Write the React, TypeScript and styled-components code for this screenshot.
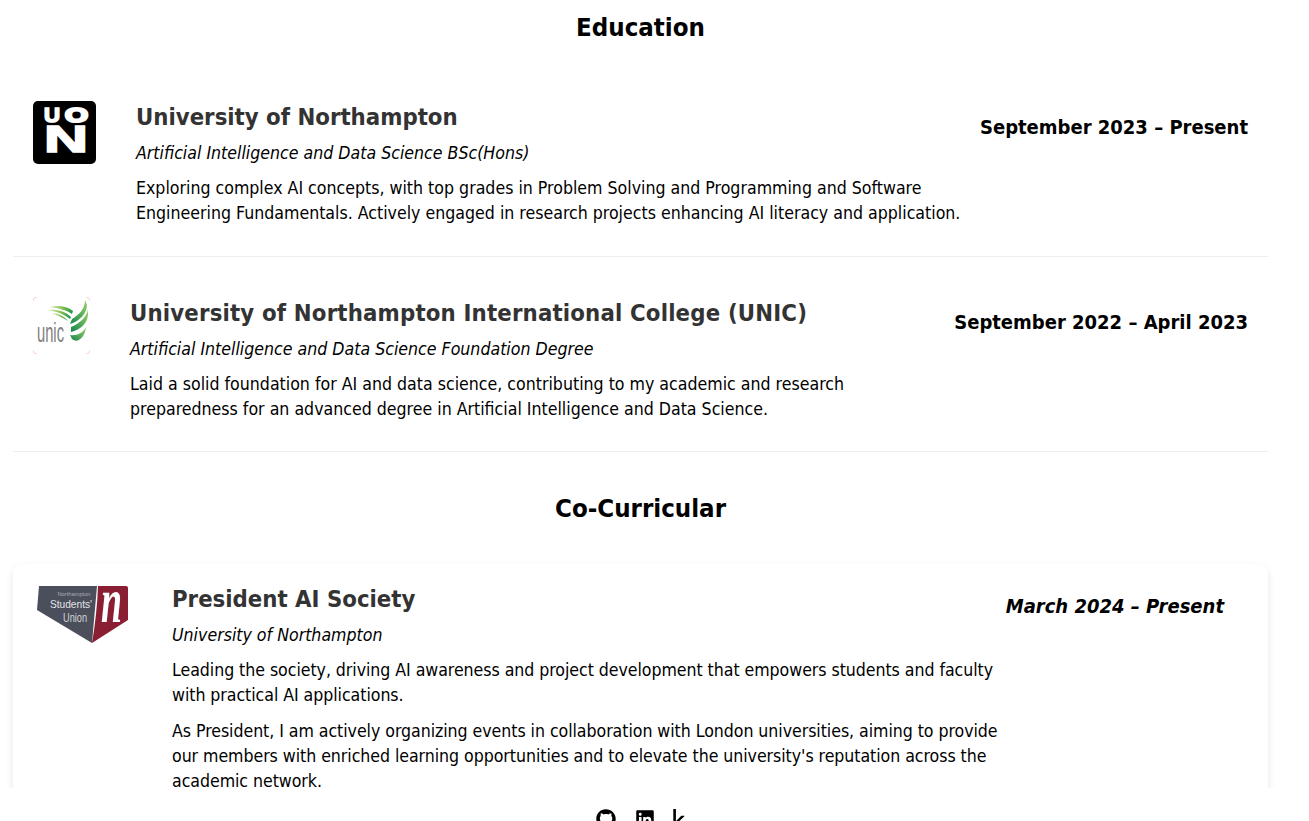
import styled, { createGlobalStyle } from 'styled-components';
import { FaGithub, FaKaggle, FaLinkedin } from 'react-icons/fa';

const GlobalStyle = createGlobalStyle`
  html, body {
    margin: 0;
    padding: 0;
    background: #fff;
    overflow: hidden;
  }

  body {
    font-family: 'DejaVu Sans Condensed', 'DejaVu Sans', sans-serif;
    color: #000;
  }
`;

const Page = styled.div`
  height: 821px;
  overflow: hidden;
`;

const Main = styled.main`
  height: 788px;
  overflow: hidden;
  padding: 0 41px 0 13px;
`;

const SectionTitle = styled.h2<{ $first?: boolean }>`
  margin: ${(p) => (p.$first ? '11px 0 18px' : '40px 0 40px')};
  font-size: 25.6px;
  line-height: 32px;
  font-weight: 700;
  text-align: center;
`;

const Entry = styled.section<{ $card?: boolean }>`
  display: flex;
  align-items: flex-start;
  padding: ${(p) => (p.$card ? '18.5px 44px 29px 20px' : '40px 20px 29.5px')};
  border-bottom: ${(p) => (p.$card ? 'none' : '1px solid #eee')};
  border-radius: ${(p) => (p.$card ? '10px' : '0')};
  box-shadow: ${(p) => (p.$card ? '0 4px 8px rgba(0, 0, 0, 0.1)' : 'none')};
`;

const Logo = styled.div<{ $width: number }>`
  flex: none;
  width: ${(p) => p.$width}px;
  margin-right: 40px;
  line-height: 0;
`;

const Body = styled.div`
  flex: 1;
  min-width: 0;
`;

const Name = styled.h3<{ $tracking?: number }>`
  margin: 1px 0 0;
  font-size: 23.7px;
  line-height: 30px;
  font-weight: 700;
  letter-spacing: ${(p) => p.$tracking ?? 0}px;
  color: #333;
`;

const Role = styled.p`
  margin: 9px 0 10px;
  font-size: 17.6px;
  line-height: 25px;
  font-style: italic;
`;

const Text = styled.p<{ $width: number; $tracking?: number }>`
  margin: 0;
  max-width: ${(p) => p.$width}px;
  font-size: 17.6px;
  line-height: 25px;
  letter-spacing: ${(p) => p.$tracking ?? 0}px;

  & + & {
    margin-top: 11px;
  }
`;

const Dates = styled.div<{ $italic?: boolean; $top: number }>`
  flex: none;
  margin: ${(p) => p.$top}px 0 0 3px;
  font-size: 20px;
  line-height: 26px;
  font-weight: 700;
  font-style: ${(p) => (p.$italic ? 'italic' : 'normal')};
`;

const Footer = styled.footer`
  display: flex;
  justify-content: center;
  gap: 19px;
  padding: 21px 25px 0 0;
  font-size: 20px;
`;

const KaggleLink = styled.span`
  margin-left: -5px;
  line-height: 0;
`;

const UonLogo = () => (
  <svg width="63" height="63" viewBox="0 0 63 63">
    <rect width="63" height="63" rx="5" fill="#000" />
    <g fontFamily="Liberation Sans" fontWeight="700" fill="#fff" stroke="#fff">
      <text x="11" y="21" fontSize="20" strokeWidth="1.6" textLength="16" lengthAdjust="spacingAndGlyphs">U</text>
      <text x="32" y="21" fontSize="20" strokeWidth="2.2" textLength="23" lengthAdjust="spacingAndGlyphs">O</text>
      <text x="11" y="51" fontSize="37" strokeWidth="1.6" textLength="44" lengthAdjust="spacingAndGlyphs">N</text>
    </g>
  </svg>
);

const UnicLogo = () => (
  <svg width="57" height="57" viewBox="0 0 57 57">
    <defs>
      <linearGradient id="streak" x1="0" y1="0" x2="1" y2="0">
        <stop offset="0" stopColor="#e4f1c4" />
        <stop offset="0.6" stopColor="#7cc04a" />
        <stop offset="1" stopColor="#1f8f4a" />
      </linearGradient>
      <linearGradient id="band" x1="1" y1="0" x2="0" y2="1">
        <stop offset="0" stopColor="#9fd36a" />
        <stop offset="1" stopColor="#14854c" />
      </linearGradient>
    </defs>
    <g fill="none" stroke="#f6c9cf" strokeWidth="0.8">
      <path d="M0 4 Q0 0 4 0" />
      <path d="M53 0 Q57 0 57 4" />
      <path d="M0 53 Q0 57 4 57" />
      <path d="M53 57 Q57 57 57 53" />
    </g>
    <path d="M16 10 C25 8 34 9 40 14 L39 17 C33 13 25 11 16 10Z" fill="url(#streak)" />
    <path d="M14 13 C23 12 32 14 38 20 L37 22 C31 17 23 14 14 13Z" fill="url(#streak)" />
    <path d="M18 16 C25 16 31 19 35 24 C30 21 25 18 18 16Z" fill="url(#streak)" />
    <path d="M52 3 C52 12 46 18 39 22 L37 27 C47 24 54 16 54 8 Z" fill="url(#band)" />
    <path d="M55 12 C54 20 46 27 38 30 L38 35 C47 33 54 27 55 18 Z" fill="url(#band)" />
    <path d="M53 30 C50 36 44 39 37 38 L39 42 C45 47 52 40 53 30 Z" fill="url(#band)" />
    <text x="4" y="45" fontFamily="Liberation Sans" fontSize="27" fill="#808080" textLength="27" lengthAdjust="spacingAndGlyphs">unic</text>
  </svg>
);

const SuLogo = () => (
  <svg width="99" height="62" viewBox="0 -1 99 62">
    <path d="M6 2 H64 L59 59 L4 26 Z" fill="#4a4f5b" />
    <path d="M65 2 H93 Q95 2 95 4 V36 L59 59 Q64 30 65 2 Z" fill="#8a1f33" />
    <g fontFamily="Liberation Sans" textAnchor="middle">
      <text x="41" y="12" fontSize="5" fill="#a9acb3" textLength="33" lengthAdjust="spacingAndGlyphs">Northampton</text>
      <text x="38" y="24" fontSize="11" fill="#e2e3e6" textLength="42" lengthAdjust="spacingAndGlyphs">Students'</text>
      <text x="42" y="38" fontSize="12" fill="#d2d4d8" textLength="24" lengthAdjust="spacingAndGlyphs">Union</text>
    </g>
    <text x="68" y="38" fontFamily="Liberation Serif" fontWeight="700" fontStyle="italic" fontSize="64" fill="#fff" textLength="21" lengthAdjust="spacingAndGlyphs">n</text>
  </svg>
);

export default function App() {
  return (
    <Page>
      <GlobalStyle />
      <Main>
        <SectionTitle $first>Education</SectionTitle>
        <Entry>
          <Logo $width={63}><UonLogo /></Logo>
          <Body>
            <Name>University of Northampton</Name>
            <Role>Artificial Intelligence and Data Science BSc(Hons)</Role>
            <Text $width={830}>
              Exploring complex AI concepts, with top grades in Problem Solving and Programming and Software
              Engineering Fundamentals. Actively engaged in research projects enhancing AI literacy and application.
            </Text>
          </Body>
          <Dates $top={13}>September 2023 – Present</Dates>
        </Entry>
        <Entry>
          <Logo $width={57}><UnicLogo /></Logo>
          <Body>
            <Name $tracking={0.17}>University of Northampton International College (UNIC)</Name>
            <Role>Artificial Intelligence and Data Science Foundation Degree</Role>
            <Text $width={760}>
              Laid a solid foundation for AI and data science, contributing to my academic and research
              preparedness for an advanced degree in Artificial Intelligence and Data Science.
            </Text>
          </Body>
          <Dates $top={12}>September 2022 – April 2023</Dates>
        </Entry>
        <SectionTitle>Co-Curricular</SectionTitle>
        <Entry $card>
          <Logo $width={99}><SuLogo /></Logo>
          <Body>
            <Name>President AI Society</Name>
            <Role>University of Northampton</Role>
            <Text $width={832} $tracking={-0.05}>
              Leading the society, driving AI awareness and project development that empowers students and faculty
              with practical AI applications.
            </Text>
            <Text $width={832} $tracking={-0.05}>
              As President, I am actively organizing events in collaboration with London universities, aiming to provide
              our members with enriched learning opportunities and to elevate the university's reputation across the
              academic network.
            </Text>
          </Body>
          <Dates $italic $top={10}>March 2024 – Present</Dates>
        </Entry>
      </Main>
      <Footer>
        <FaGithub />
        <FaLinkedin />
        <KaggleLink><FaKaggle /></KaggleLink>
      </Footer>
    </Page>
  );
}
